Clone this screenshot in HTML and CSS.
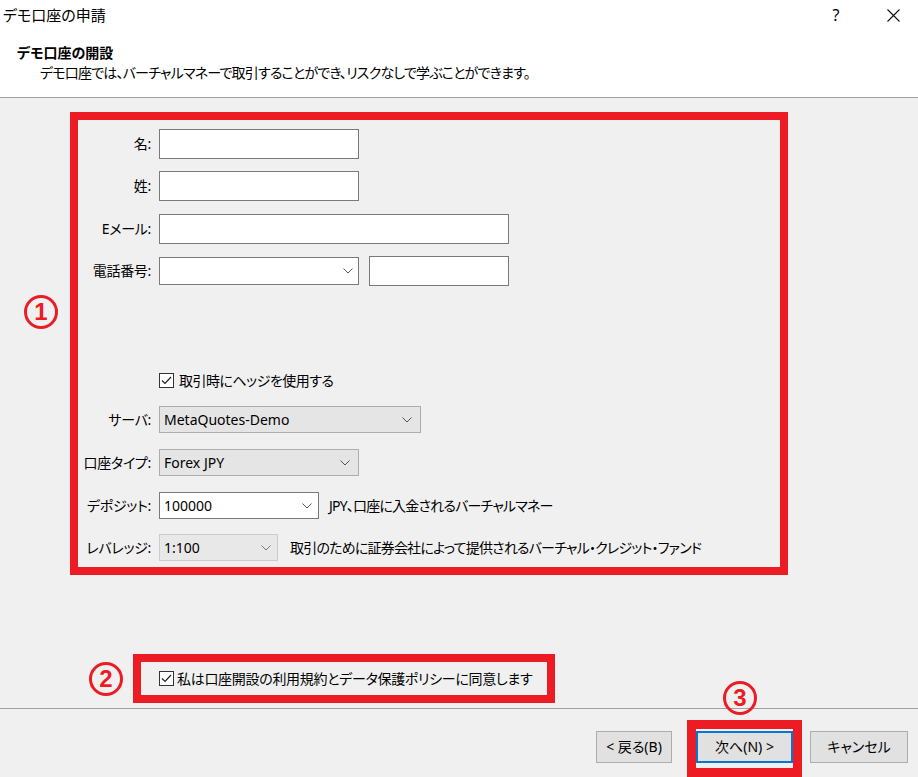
FILE: index.html
```html
<!DOCTYPE html>
<html lang="ja">
<head>
<meta charset="utf-8">
<title>デモ口座の申請</title>
<link rel="stylesheet" href="styles.css">
</head>
<body>
<div class="titlebar">
  <span class="title">デモ口座の申請</span>
  <span class="tb-btn tb-help">?</span>
  <span class="tb-btn tb-close"><svg width="13" height="13" viewBox="0 0 13 13"><path d="M0.5 0.5L12.5 12.5M12.5 0.5L0.5 12.5" stroke="#111" stroke-width="1.1" fill="none"/></svg></span>
</div>

<div class="header">
  <div class="head-title">デモ口座の開設</div>
  <div class="head-sub">デモ口座では、バーチャルマネーで取引することができ、リスクなしで学ぶことができます。</div>
</div>

<div class="main">
  <div class="mark mark-1">1</div>
  <div class="form mark-box">
    <div class="row row-first">
      <span class="label">名:</span>
      <span class="edit"></span>
    </div>
    <div class="row row-text">
      <span class="label">姓:</span>
      <span class="edit"></span>
    </div>
    <div class="row row-text2">
      <span class="label">Eメール:</span>
      <span class="edit edit-wide"></span>
    </div>
    <div class="row row-text">
      <span class="label">電話番号:</span>
      <span class="combo combo-white combo-phone"><span class="combo-val"></span><svg class="chev" width="10" height="6" viewBox="0 0 10 6"><path d="M0.5 0.5L5 5L9.5 0.5" stroke="#555" fill="none"/></svg></span>
      <span class="edit edit-phone"></span>
    </div>
    <div class="row row-check">
      <span class="check"><svg width="13" height="13" viewBox="0 0 13 13"><path d="M2 6.5L5 9.5L11 3" stroke="#222" stroke-width="1.2" fill="none"/></svg></span>
      <span class="check-text">取引時にヘッジを使用する</span>
    </div>
    <div class="row row-sel row-server">
      <span class="label">サーバ:</span>
      <span class="combo combo-server"><span class="combo-val">MetaQuotes-Demo</span><svg class="chev" width="10" height="6" viewBox="0 0 10 6"><path d="M0.5 0.5L5 5L9.5 0.5" stroke="#555" fill="none"/></svg></span>
    </div>
    <div class="row row-sel">
      <span class="label">口座タイプ:</span>
      <span class="combo combo-type"><span class="combo-val">Forex JPY</span><svg class="chev" width="10" height="6" viewBox="0 0 10 6"><path d="M0.5 0.5L5 5L9.5 0.5" stroke="#555" fill="none"/></svg></span>
    </div>
    <div class="row row-sel">
      <span class="label">デポジット:</span>
      <span class="combo combo-white combo-deposit"><span class="combo-val">100000</span><svg class="chev" width="10" height="6" viewBox="0 0 10 6"><path d="M0.5 0.5L5 5L9.5 0.5" stroke="#555" fill="none"/></svg></span>
      <span class="note">JPY、口座に入金されるバーチャルマネー</span>
    </div>
    <div class="row row-sel row-lev">
      <span class="label">レバレッジ:</span>
      <span class="combo combo-off combo-lev"><span class="combo-val">1:100</span><svg class="chev" width="10" height="6" viewBox="0 0 10 6"><path d="M0.5 0.5L5 5L9.5 0.5" stroke="#777" fill="none"/></svg></span>
      <span class="note note-wide">取引のために証券会社によって提供されるバーチャル・クレジット・ファンド</span>
    </div>
  </div>
</div>

<div class="agree-row">
  <div class="mark">2</div>
  <div class="agree mark-box">
    <span class="check"><svg width="13" height="13" viewBox="0 0 13 13"><path d="M2 6.5L5 9.5L11 3" stroke="#222" stroke-width="1.2" fill="none"/></svg></span>
    <span class="check-text">私は口座開設の利用規約とデータ保護ポリシーに同意します</span>
  </div>
</div>

<div class="footer">
  <span class="btn btn-back">&lt; 戻る(B)</span>
  <div class="next-wrap">
    <div class="mark mark-3">3</div>
    <span class="btn btn-next">次へ(N) &gt;</span>
  </div>
  <span class="btn btn-cancel">キャンセル</span>
</div>
</body>
</html>
```

FILE: styles.css
```css
/* Demo account dialog */

html, body
{ margin: 0;
padding: 0;
}

body
{ width: 918px;
height: 777px;
overflow: hidden;
background-color: #f0f0f0;
color: #000;
font-family: "Noto Sans", "Noto Sans CJK JP", sans-serif;
font-size: 14px;
line-height: 20px;
font-feature-settings: "palt";
}

/* title bar + header */

div.titlebar
{ display: flex;
align-items: center;
height: 30px;
padding-right: 2px;
background-color: #fff;
}

span.title
{ flex: 1;
padding-left: 3px;
font-size: 15px;
}

span.tb-btn
{ width: 46px;
height: 30px;
display: flex;
align-items: center;
justify-content: center;
}

span.tb-help
{ margin-right: 11px;
font-size: 16px;
}

div.header
{ background-color: #fff;
padding: 13px 0 14px 17px;
border-bottom: 1px solid #a0a0a0;
}

div.head-title
{ font-weight: bold;
}

div.head-sub
{ padding-left: 23px;
letter-spacing: -0.8px;
}

/* annotation marks */

div.mark
{ box-sizing: border-box;
width: 34px;
height: 34px;
border: 3px solid #ed1c24;
border-radius: 50%;
color: #ed1c24;
font-family: "Liberation Sans", sans-serif;
font-weight: bold;
font-size: 24px;
line-height: 28px;
text-align: center;
flex: none;
}

.mark-box
{ border: 8px solid #ed1c24;
}

/* main form */

div.main
{ display: flex;
align-items: flex-start;
margin-top: 14px;
padding-left: 24px;
}

div.mark-1
{ margin-top: 183px;
margin-right: 12px;
}

div.form
{ width: 702px;
padding-bottom: 6px;
}

div.row
{ display: flex;
align-items: center;
height: 30px;
}

div.row-first { margin-top: 9px; }
div.row-text { margin-top: 12px; }
div.row-text2 { margin-top: 13px; }

div.row-check
{ height: 15px;
margin-top: 87px;
padding-left: 81px;
}

div.row-sel
{ height: 27px;
margin-top: 16px;
}

div.row-server { margin-top: 18px; }
div.row-lev { margin-top: 15px; }

span.label
{ width: 73px;
margin-right: 8px;
text-align: right;
letter-spacing: -0.3px;
flex: none;
}

span.edit
{ box-sizing: border-box;
width: 200px;
height: 30px;
background-color: #fff;
border: 1px solid #7a7a7a;
}

span.edit-wide { width: 350px; }

span.edit-phone
{ width: 140px;
margin-left: 10px;
}

span.combo
{ box-sizing: border-box;
display: flex;
align-items: center;
height: 27px;
padding: 0 7px 0 4px;
background-color: #e5e5e5;
border: 1px solid #adadad;
}

span.combo-white
{ background-color: #fff;
border-color: #7a7a7a;
}

span.combo-off
{ background-color: #e8e8e8;
border-color: #cccccc;
}

span.combo-val
{ flex: 1;
white-space: nowrap;
}

span.combo-phone { width: 200px; height: 28px; padding-right: 5px; }
span.combo-server { width: 262px; padding-right: 8px; }
span.combo-type { width: 200px; padding-right: 8px; }
span.combo-deposit { width: 160px; padding-right: 6px; }
span.combo-lev { width: 119px; padding-right: 6px; }

span.note
{ margin-left: 10px;
white-space: nowrap;
letter-spacing: -0.8px;
}

span.note-wide { margin-left: 12px; }

/* checkboxes */

span.check
{ box-sizing: border-box;
width: 15px;
height: 15px;
display: flex;
align-items: center;
justify-content: center;
background-color: #fff;
border: 1px solid #333;
flex: none;
}

span.check-text
{ margin-left: 5px;
white-space: nowrap;
letter-spacing: -0.5px;
}

div.agree-row
{ display: flex;
align-items: center;
margin-top: 79px;
padding-left: 89px;
}

div.agree-row div.mark
{ margin-right: 10px;
}

div.agree
{ display: flex;
align-items: center;
width: 388px;
height: 33px;
padding-left: 18px;
}

div.agree span.check-text
{ margin-left: 3px;
letter-spacing: -0.3px;
}

/* buttons */

div.footer
{ display: flex;
align-items: flex-start;
justify-content: flex-end;
margin-top: 5px;
padding: 11px 10px 0 0;
border-top: 1px solid #a0a0a0;
}

span.btn
{ box-sizing: border-box;
display: flex;
align-items: center;
justify-content: center;
height: 32px;
background-color: #e1e1e1;
border: 1px solid #adadad;
white-space: nowrap;
}

span.btn-back
{ width: 76px;
margin-top: 11px;
}

span.btn-cancel
{ width: 98px;
margin-top: 11px;
}

div.next-wrap
{ position: relative;
margin: 0 8px 0 15px;
padding: 2px 0 5px 0;
border: 9px solid #ed1c24;
}

span.btn-next
{ width: 97px;
border: 2px solid #0078d7;
}

div.mark-3
{ position: absolute;
left: 27px;
top: -48px;
}
```
